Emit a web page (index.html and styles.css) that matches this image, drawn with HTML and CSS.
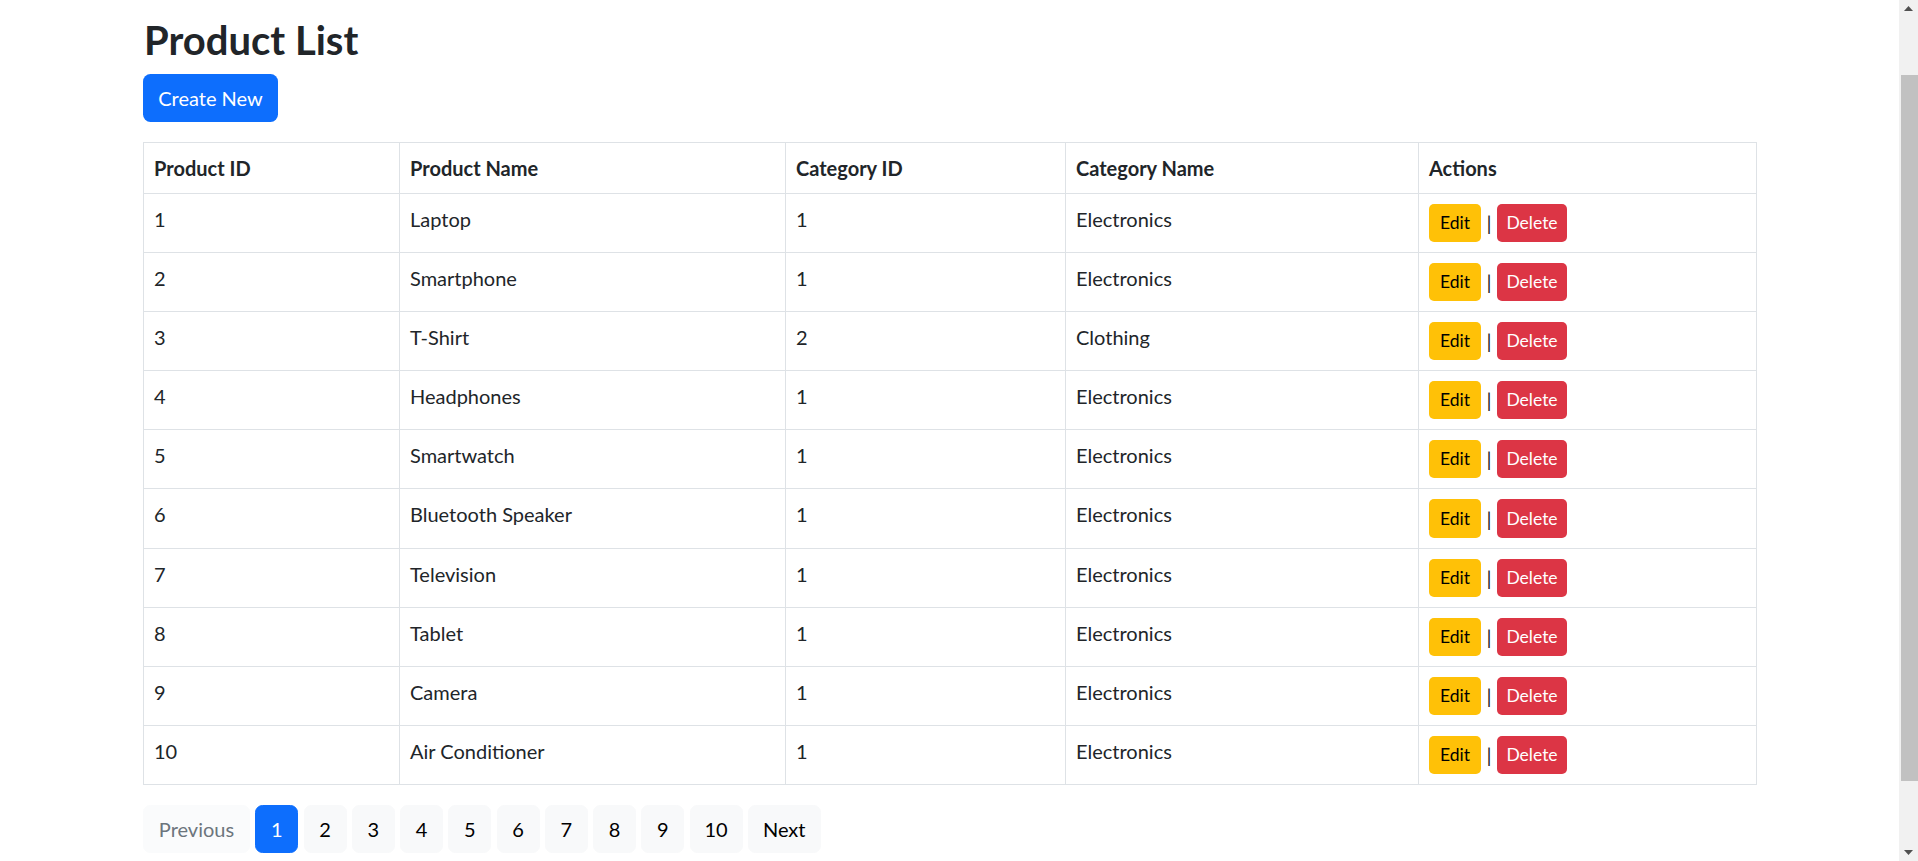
FILE: index.html
```html
<!DOCTYPE html>
<html lang="en">
<head>
<meta charset="utf-8">
<title>Product List</title>
<link rel="stylesheet" href="styles.css">
</head>
<body>
<main class="viewport">
  <div class="container">
    <h2 class="title">Product List</h2>
    <a class="btn btn-create" href="#">Create New</a>
    <table class="table">
      <thead>
        <tr>
          <th class="col-id">Product ID</th>
          <th class="col-name">Product Name</th>
          <th class="col-cid">Category ID</th>
          <th class="col-cname">Category Name</th>
          <th class="col-actions">Actions</th>
        </tr>
      </thead>
      <tbody>
        <tr><td>1</td><td>Laptop</td><td>1</td><td>Electronics</td><td><div class="actions"><a class="btn btn-sm btn-edit" href="#">Edit</a><span class="sep">|</span><a class="btn btn-sm btn-delete" href="#">Delete</a></div></td></tr>
        <tr><td>2</td><td>Smartphone</td><td>1</td><td>Electronics</td><td><div class="actions"><a class="btn btn-sm btn-edit" href="#">Edit</a><span class="sep">|</span><a class="btn btn-sm btn-delete" href="#">Delete</a></div></td></tr>
        <tr><td>3</td><td>T-Shirt</td><td>2</td><td>Clothing</td><td><div class="actions"><a class="btn btn-sm btn-edit" href="#">Edit</a><span class="sep">|</span><a class="btn btn-sm btn-delete" href="#">Delete</a></div></td></tr>
        <tr><td>4</td><td>Headphones</td><td>1</td><td>Electronics</td><td><div class="actions"><a class="btn btn-sm btn-edit" href="#">Edit</a><span class="sep">|</span><a class="btn btn-sm btn-delete" href="#">Delete</a></div></td></tr>
        <tr><td>5</td><td>Smartwatch</td><td>1</td><td>Electronics</td><td><div class="actions"><a class="btn btn-sm btn-edit" href="#">Edit</a><span class="sep">|</span><a class="btn btn-sm btn-delete" href="#">Delete</a></div></td></tr>
        <tr><td>6</td><td>Bluetooth Speaker</td><td>1</td><td>Electronics</td><td><div class="actions"><a class="btn btn-sm btn-edit" href="#">Edit</a><span class="sep">|</span><a class="btn btn-sm btn-delete" href="#">Delete</a></div></td></tr>
        <tr><td>7</td><td>Television</td><td>1</td><td>Electronics</td><td><div class="actions"><a class="btn btn-sm btn-edit" href="#">Edit</a><span class="sep">|</span><a class="btn btn-sm btn-delete" href="#">Delete</a></div></td></tr>
        <tr><td>8</td><td>Tablet</td><td>1</td><td>Electronics</td><td><div class="actions"><a class="btn btn-sm btn-edit" href="#">Edit</a><span class="sep">|</span><a class="btn btn-sm btn-delete" href="#">Delete</a></div></td></tr>
        <tr><td>9</td><td>Camera</td><td>1</td><td>Electronics</td><td><div class="actions"><a class="btn btn-sm btn-edit" href="#">Edit</a><span class="sep">|</span><a class="btn btn-sm btn-delete" href="#">Delete</a></div></td></tr>
        <tr><td>10</td><td>Air Conditioner</td><td>1</td><td>Electronics</td><td><div class="actions"><a class="btn btn-sm btn-edit" href="#">Edit</a><span class="sep">|</span><a class="btn btn-sm btn-delete" href="#">Delete</a></div></td></tr>
      </tbody>
    </table>
    <nav class="pager">
      <span class="pg pg-disabled pg-prev">Previous</span>
      <a class="pg pg-active" href="#">1</a>
      <a class="pg" href="#">2</a>
      <a class="pg" href="#">3</a>
      <a class="pg" href="#">4</a>
      <a class="pg" href="#">5</a>
      <a class="pg" href="#">6</a>
      <a class="pg" href="#">7</a>
      <a class="pg" href="#">8</a>
      <a class="pg" href="#">9</a>
      <a class="pg pg-wide" href="#">10</a>
      <a class="pg pg-next" href="#">Next</a>
    </nav>
  </div>
</main>
<aside class="scrollbar">
  <div class="sb-arrow"><svg width="9" height="5" viewBox="0 0 9 5"><polygon points="4.5,0 9,5 0,5" fill="#505050"/></svg></div>
  <div class="sb-thumb"></div>
  <div class="sb-arrow sb-arrow-down"><svg width="9" height="5" viewBox="0 0 9 5"><polygon points="0,0 9,0 4.5,5" fill="#505050"/></svg></div>
</aside>
</body>
</html>
```
FILE: styles.css
```css
* {
  box-sizing: border-box;
}

html,
body {
  margin: 0;
  height: 861px;
  overflow: hidden;
}

body {
  display: flex;
  background: #fff;
  color: #212529;
  font-family: Lato, "Open Sans", "Liberation Sans", sans-serif;
}

.viewport {
  flex: 1;
  min-width: 0;
}

.container {
  width: 1613px;
  margin: 0 auto;
  padding-top: 16px;
}

.title {
  margin: 0 0 10px;
  font-size: 40px;
  line-height: 48px;
  font-weight: 700;
  color: #212529;
  padding-left: 1px;
}

.btn {
  display: inline-flex;
  align-items: center;
  justify-content: center;
  border: 1px solid transparent;
  border-radius: 7.5px;
  font-size: 20px;
  line-height: 30px;
  text-decoration: none;
  white-space: nowrap;
}

.btn-create {
  width: 135px;
  height: 47.5px;
  background: #0d6efd;
  color: #fff;
}

.table {
  width: 100%;
  border-collapse: collapse;
  table-layout: fixed;
  margin: 20px 0 20px;
}

.table th,
.table td {
  border: 1px solid #dee2e6;
  padding: 10px;
  font-size: 20px;
  line-height: 30px;
  text-align: left;
  vertical-align: top;
  color: #212529;
}

.table th {
  font-weight: 700;
}

.col-id { width: 256px; }
.col-name { width: 386px; }
.col-cid { width: 280px; }
.col-cname { width: 353px; }
.col-actions { width: 338px; }

.actions {
  display: flex;
  align-items: center;
  height: 38.2px;
}

.btn-sm {
  height: 38.2px;
  font-size: 17.5px;
  line-height: 26px;
  border-radius: 5px;
}

.btn-edit {
  width: 52px;
  background: #ffc107;
  color: #000;
}

.btn-delete {
  width: 70px;
  background: #dc3545;
  color: #fff;
}

.sep {
  width: 16px;
  text-align: center;
  font-size: 20px;
  line-height: 30px;
  color: #212529;
}

.pager {
  display: flex;
  gap: 5.25px;
}

.pg {
  display: inline-flex;
  align-items: center;
  justify-content: center;
  height: 47.5px;
  min-width: 43px;
  padding: 0 14px;
  border: 1px solid #f8f9fa;
  border-radius: 7.5px;
  background: #f8f9fa;
  color: #000;
  font-size: 20px;
  line-height: 30px;
  text-decoration: none;
}

.pg-prev {
  width: 107px;
}

.pg-wide {
  width: 53px;
}

.pg-next {
  width: 73px;
}

.pg-active {
  background: #0d6efd;
  border-color: #0d6efd;
  color: #fff;
}

.pg-disabled {
  background: #fafbfc;
  border-color: #fafbfc;
  color: #6c757d;
}

.scrollbar {
  flex: none;
  width: 19px;
  height: 861px;
  background: #f1f1f1;
  display: flex;
  flex-direction: column;
  align-items: flex-end;
}

.sb-arrow {
  width: 19px;
  height: 17px;
  display: flex;
  align-items: center;
  justify-content: center;
}

.sb-thumb {
  width: 17px;
  height: 706px;
  margin-top: 58px;
  background: #c1c1c1;
}

.sb-arrow-down {
  margin-top: auto;
}
```
